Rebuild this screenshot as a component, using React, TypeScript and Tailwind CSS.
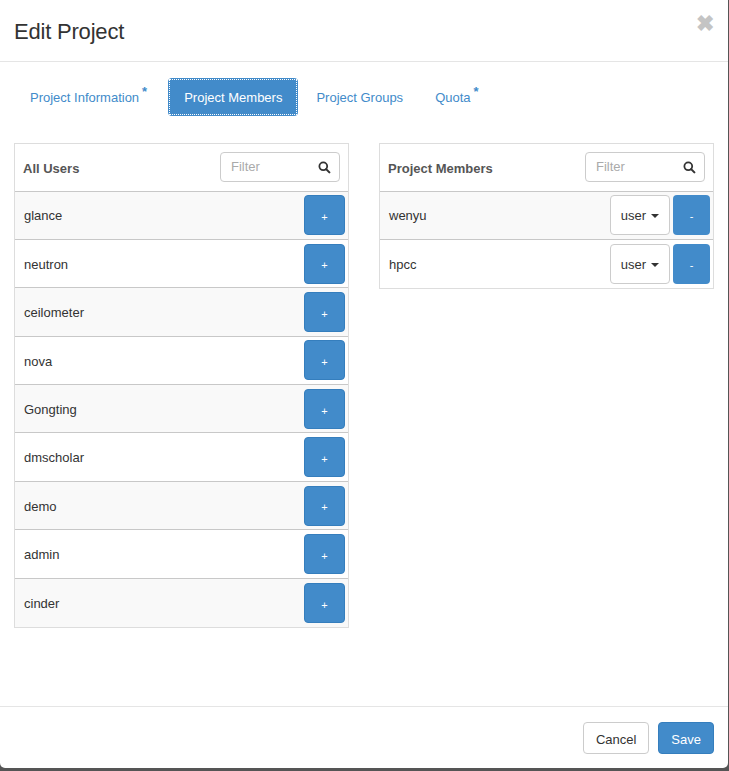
import { useState } from "react";

const allUsers = ["glance", "neutron", "ceilometer", "nova", "Gongting", "dmscholar", "demo", "admin", "cinder"];
const members = ["wenyu", "hpcc"];

function SearchIcon() {
  return (
    <svg width="13" height="13" viewBox="0 0 16 16" fill="none">
      <circle cx="6.5" cy="6.5" r="4.8" stroke="#333" strokeWidth="2.2" />
      <path d="M10 10l4 4" stroke="#333" strokeWidth="2.6" strokeLinecap="round" />
    </svg>
  );
}

function FilterBox() {
  return (
    <div className="flex h-[30px] w-[120px] items-center justify-between rounded-[4px] border border-[#ccc] bg-white pl-[10px] pr-[8px]">
      <span className="text-[13px] text-[#aaa]">Filter</span>
      <SearchIcon />
    </div>
  );
}

function PanelHeader({ title }: { title: string }) {
  return (
    <div className="flex h-[48px] items-center justify-between border-b border-[#c8c8c8] pl-[8px] pr-[8px]">
      <span className="pt-[3px] text-[13px] font-bold text-[#555]">{title}</span>
      <FilterBox />
    </div>
  );
}

export default function App() {
  const [tab] = useState("members");

  return (
    <div className="h-[771px] w-[729px] bg-[#555]" style={{ fontFamily: '"Liberation Sans", Arial, sans-serif' }}>
      <div className="flex h-[768px] w-[728px] flex-col rounded-b-[5px] bg-white text-[#333]">
        <div className="flex h-[62px] items-start justify-between border-b border-[#e5e5e5] pl-[14px] pr-[14px]">
          <h3 className="mt-[16px] text-[22px] leading-[32px] tracking-[-0.2px] text-[#333]">Edit Project</h3>
          <span className="mt-[11px] text-[22px] font-bold leading-[26px] text-[#c4c4c4]">✖</span>
        </div>

        <div className="flex items-center gap-[3px] pl-[16px] pt-[16px] text-[13px] text-[#428bca]">
          <div className="px-[14px] pb-[7px] pt-[9px]">
            Project Information<sup className="ml-[3px] text-[13px] font-bold">*</sup>
          </div>
          <div className={tab === "members" ? "ml-[4px] rounded-[4px] bg-[#428bca] p-[1px]" : ""}>
            <div className="border border-dotted border-white px-[14px] pb-[6px] pt-[8px] text-white">Project Members</div>
          </div>
          <div className="px-[15px] pb-[7px] pt-[9px]">Project Groups</div>
          <div className="px-[14px] pb-[7px] pt-[9px]">
            Quota<sup className="ml-[3px] text-[13px] font-bold">*</sup>
          </div>
        </div>

        <div className="flex flex-1 items-start gap-[30px] px-[14px] pt-[27px] text-[13px]">
          <div className="w-[335px] border border-[#ddd]">
            <PanelHeader title="All Users" />
            {allUsers.map((u, i) => (
              <div
                key={u}
                className={
                  "flex h-[48.4px] items-center justify-between border-b border-[#c8c8c8] pl-[9px] pr-[3px] last:border-b-0 " +
                  (i % 2 === 0 ? "bg-[#f9f9f9]" : "bg-white")
                }
              >
                <span className="pt-[2px]">{u}</span>
                <button className="flex h-[40px] w-[41px] items-center justify-center rounded-[4px] border border-[#357ebd] bg-[#428bca] pt-[4px] text-[11px] text-white">
                  +
                </button>
              </div>
            ))}
          </div>

          <div className="w-[335px] border border-[#ddd]">
            <PanelHeader title="Project Members" />
            {members.map((m, i) => (
              <div
                key={m}
                className={
                  "flex h-[48.4px] items-center justify-between border-b border-[#c8c8c8] pl-[9px] pr-[3px] last:border-b-0 " +
                  (i % 2 === 0 ? "bg-[#f9f9f9]" : "bg-white")
                }
              >
                <span className="pt-[2px]">{m}</span>
                <div className="flex gap-[3px]">
                  <div className="flex h-[40px] w-[60px] items-center justify-center gap-[5px] rounded-[4px] border border-[#ccc] bg-white pt-[1px]">
                    <span>user</span>
                    <span className="h-0 w-0 border-x-[4px] border-t-[4px] border-x-transparent border-t-[#333]" />
                  </div>
                  <button className="flex h-[40px] w-[37px] items-center justify-center rounded-[4px] bg-[#428bca] pt-[2px] text-[11px] text-white">
                    -
                  </button>
                </div>
              </div>
            ))}
          </div>
        </div>

        <div className="flex h-[62px] items-start justify-end gap-[9px] border-t border-[#e5e5e5] pr-[14px] pt-[15px] text-[13px]">
          <button className="h-[32px] rounded-[4px] border border-[#ccc] bg-white px-[12px] pt-[3px] text-[#333]">Cancel</button>
          <button className="h-[32px] rounded-[4px] border border-[#357ebd] bg-[#428bca] px-[12px] pt-[3px] text-white">Save</button>
        </div>
      </div>
    </div>
  );
}
